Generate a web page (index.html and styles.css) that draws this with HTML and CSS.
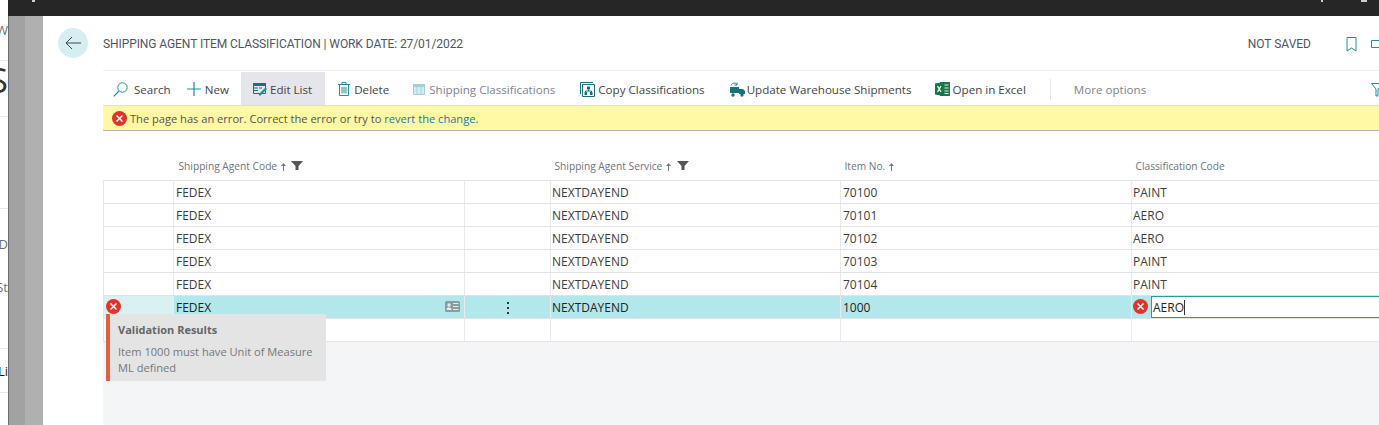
FILE: index.html
```html
<!DOCTYPE html>
<html>
    <head>
        <title>Shipping Agent Item Classification</title>
        <link rel="stylesheet" href="styles.css">
    </head>
    <body>
        <div class="behind">
            <div class="behind-row r1"><span>W</span></div>
            <div class="behind-row r2"><span class="big">S</span></div>
            <div class="behind-row r3"></div>
            <div class="behind-row r4"><span>D</span><span>St</span></div>
            <div class="behind-row r5"><span class="dark">Li</span></div>
            <div class="behind-row r6"></div>
        </div>

        <div class="sheet">
            <div class="topbar">
                <i class="bit bit-a"></i>
                <i class="bit bit-b"></i>
                <i class="bit bit-c"></i>
            </div>

            <div class="sheet-body">
                <div class="shade"></div>

                <div class="main">
                    <header class="title-row">
                        <button class="back">
                            <svg width="16" height="14" viewBox="0 0 16 14"><path d="M7 1 1 7l6 6M1 7h15" fill="none" stroke="#3c4650" stroke-width="1"/></svg>
                        </button>
                        <h1>SHIPPING AGENT ITEM CLASSIFICATION | WORK DATE: 27/01/2022</h1>
                        <span class="saved">NOT SAVED</span>
                        <svg class="bookmark" width="11" height="15" viewBox="0 0 11 15"><path d="M1 .5h9v13.500L5.500 11 1 14z" fill="none" stroke="#1f8f98" stroke-width="1"/></svg>
                        <svg class="expand" width="8" height="8" viewBox="0 0 8 8"><path d="M8 .5H.5v7H8" fill="none" stroke="#1f8f98" stroke-width="1"/></svg>
                    </header>

                    <nav class="toolbar">
                        <a class="tool tool-search">
                            <svg width="15" height="15" viewBox="0 0 15 15"><circle cx="9.500" cy="5.500" r="4.700" fill="none" stroke="#1f8f98"/><path d="M6 9 .8 14.300" stroke="#1f8f98" stroke-width="1.200"/></svg>
                            Search
                        </a>
                        <a class="tool tool-new">
                            <svg width="14" height="14" viewBox="0 0 14 14"><path d="M7 0v14M0 7h14" stroke="#1f8f98" stroke-width="1.200"/></svg>
                            New
                        </a>
                        <a class="tool tool-edit">
                            <svg width="14" height="13" viewBox="0 0 14 13"><path d="M.5.500h12v10H.5z" fill="none" stroke="#16727c"/><path d="M0 0h13v3H0z" fill="#16727c"/><path d="M1 5h4M1 7.500h4M6 5h3" stroke="#16727c"/><path d="m6 11 6.500-6.500 1.500 1.500L7.500 12.500H6z" fill="#1f8f98"/></svg>
                            Edit List
                        </a>
                        <a class="tool tool-delete">
                            <svg width="12" height="14" viewBox="0 0 12 14"><path d="M0 2.500h12M4 2.500V.500h4v2M1.500 2.500v11h9v-11M4 5v6.500M6 5v6.500M8 5v6.500" fill="none" stroke="#1f8f98"/></svg>
                            Delete
                        </a>
                        <a class="tool tool-ship off">
                            <svg width="12" height="11" viewBox="0 0 12 11"><path d="M.5.500h11v10H.5z" fill="#d5edef" stroke="#9fd2d6"/><path d="M0 0h12v2.500H0zM4 2v8M8 2v8" fill="#9fd2d6" stroke="#9fd2d6"/></svg>
                            Shipping Classifications
                        </a>
                        <a class="tool tool-copy">
                            <svg width="15" height="15" viewBox="0 0 15 15"><path d="M.5 12V.500H13" fill="none" stroke="#16727c"/><path d="M2.500 2.500h12v12h-12z" fill="#fff" stroke="#16727c"/><path d="M7 4.500h3v3H7zM4.500 10h2.500v3H4.500zM10 10h2.500v3H10z" fill="#16727c"/><path d="M8.500 7.500V9M5.500 10V9h6v1" fill="none" stroke="#16727c"/></svg>
                            Copy Classifications
                        </a>
                        <a class="tool tool-update">
                            <svg width="16" height="15" viewBox="0 0 16 15"><path d="M1 5h9v6H1z" fill="#16727c"/><path d="M10 7h4l2 2v3h-6z" fill="#16727c"/><circle cx="4" cy="13" r="1.700" fill="#16727c"/><circle cx="13" cy="13" r="1.700" fill="#16727c"/><path d="M2 3.500C3 .5 7 .5 8 2.500M8 .5v2.500H5.500" fill="none" stroke="#1f8f98"/></svg>
                            Update Warehouse Shipments
                        </a>
                        <a class="tool tool-excel">
                            <svg width="15" height="14" viewBox="0 0 15 14"><path d="M5 0h10v14H5z" fill="#21794b"/><path d="M9.500 3h4M9.500 6h4M9.500 9h4M9.500 11.500h4" stroke="#dff0e6"/><path d="M0 1.500 9 0v14L0 12.500z" fill="#107c41"/><path d="m2.500 4 3.500 6M6 4l-3.500 6" stroke="#fff" stroke-width="1.300"/></svg>
                            Open in Excel
                        </a>
                        <span class="divider"></span>
                        <a class="tool tool-more">More options</a>
                        <svg class="filter" width="12" height="14" viewBox="0 0 12 14"><path d="M.5.500h11.500L7 6v7H5V6z" fill="none" stroke="#1f8f98"/></svg>
                    </nav>

                    <div class="banner">
                        <svg class="err" width="15" height="15" viewBox="0 0 15 15"><circle cx="7.500" cy="7.500" r="7.500" fill="#e3322b"/><path d="m4.500 4.500 6 6m0-6-6 6" stroke="#fff" stroke-width="1.500"/></svg>
                        <span>The page has an error. Correct the error or try to <a href="#">revert the change.</a></span>
                    </div>

                    <div class="grid-wrap">
                        <table class="grid">
                            <colgroup>
                                <col class="c-sel"><col class="c-agent"><col class="c-menu"><col class="c-service"><col class="c-item"><col class="c-class">
                            </colgroup>
                            <thead>
                                <tr>
                                    <th></th>
                                    <th>Shipping Agent Code
                                        <svg class="arrow" width="5" height="8" viewBox="0 0 5 8"><path d="M2.500 0 5 3H3v5H2V3H0z" fill="#777"/></svg>
                                        <svg class="funnel" width="12" height="9" viewBox="0 0 12 9"><path d="M0 0h12L7.500 5v4h-3V5z" fill="#555"/></svg>
                                    </th>
                                    <th></th>
                                    <th>Shipping Agent Service
                                        <svg class="arrow" width="5" height="8" viewBox="0 0 5 8"><path d="M2.500 0 5 3H3v5H2V3H0z" fill="#777"/></svg>
                                        <svg class="funnel" width="12" height="9" viewBox="0 0 12 9"><path d="M0 0h12L7.500 5v4h-3V5z" fill="#555"/></svg>
                                    </th>
                                    <th>Item No.
                                        <svg class="arrow" width="5" height="8" viewBox="0 0 5 8"><path d="M2.500 0 5 3H3v5H2V3H0z" fill="#777"/></svg>
                                    </th>
                                    <th>Classification Code</th>
                                </tr>
                            </thead>
                            <tbody>
                                <tr><td></td><td>FEDEX</td><td></td><td>NEXTDAYEND</td><td>70100</td><td>PAINT</td></tr>
                                <tr><td></td><td>FEDEX</td><td></td><td>NEXTDAYEND</td><td>70101</td><td>AERO</td></tr>
                                <tr><td></td><td>FEDEX</td><td></td><td>NEXTDAYEND</td><td>70102</td><td>AERO</td></tr>
                                <tr><td></td><td>FEDEX</td><td></td><td>NEXTDAYEND</td><td>70103</td><td>PAINT</td></tr>
                                <tr><td></td><td>FEDEX</td><td></td><td>NEXTDAYEND</td><td>70104</td><td>PAINT</td></tr>
                                <tr class="active">
                                    <td class="sel-cell">
                                        <svg class="err" width="15" height="15" viewBox="0 0 15 15"><circle cx="7.500" cy="7.500" r="7.500" fill="#e3322b"/><path d="m4.500 4.500 6 6m0-6-6 6" stroke="#fff" stroke-width="1.500"/></svg>
                                    </td>
                                    <td class="agent-cell">
                                        <span>FEDEX</span>
                                        <svg width="15" height="11" viewBox="0 0 15 11"><rect width="15" height="11" rx="1.500" fill="#8f9a9c"/><circle cx="4" cy="4" r="1.700" fill="#d9f1f3"/><path d="M1.500 9c0-2 1-2.500 2.500-2.500S6.500 7 6.500 9z" fill="#d9f1f3"/><path d="M8 2.500h5.500M8 5.500h5.500M8 8.500h5.500" stroke="#d9f1f3"/></svg>
                                    </td>
                                    <td class="menu-cell"><span class="dots"><i></i><i></i><i></i></span></td>
                                    <td>NEXTDAYEND</td>
                                    <td>1000</td>
                                    <td class="class-cell">
                                        <svg class="err" width="15" height="15" viewBox="0 0 15 15"><circle cx="7.500" cy="7.500" r="7.500" fill="#e3322b"/><path d="m4.500 4.500 6 6m0-6-6 6" stroke="#fff" stroke-width="1.500"/></svg>
                                        <span class="field">AERO<i class="caret"></i></span>
                                    </td>
                                </tr>
                                <tr class="blank"><td></td><td></td><td></td><td></td><td></td><td></td></tr>
                            </tbody>
                        </table>

                        <div class="tip">
                            <h3>Validation Results</h3>
                            <p>Item 1000 must have Unit of Measure ML defined</p>
                        </div>
                    </div>
                </div>
            </div>
        </div>
    </body>
</html>
```

FILE: styles.css
```css
html, body {
    margin: 0;
    height: 425px;
    overflow: hidden;
}

body {
    display: flex;
    font-family: "Open Sans", "Noto Sans", sans-serif;
    font-size: 12px;
    color: #333;
    background: #fff;
}

/* the page that is left behind the slide-in sheet */
.behind {
    width: 8px;
    flex: none;
    overflow: hidden;
    color: #66707a;
}

.behind-row {
    display: flex;
    justify-content: flex-end;
    align-items: center;
    box-sizing: border-box;
    border-bottom: 1px solid #e8e8e8;
    white-space: nowrap;
    font-size: 13px;
}

.behind-row.r1 { height: 61px; }
.behind-row.r2 { height: 56px; align-items: flex-start; padding-top: 2px; }
.behind-row.r3 { height: 92px; }
.behind-row.r4 {
    height: 140px;
    flex-direction: column;
    align-items: flex-end;
    justify-content: flex-start;
    gap: 25px;
    padding-top: 26px;
}
.behind-row.r5 { height: 44px; }
.behind-row.r6 { border: 0; height: 32px; }

.behind .big {
    font-size: 34px;
    color: #333;
    line-height: 1;
}

.behind .dark {
    color: #222;
}

.sheet {
    flex: 1;
    display: flex;
    flex-direction: column;
    min-width: 0;
}

.topbar {
    height: 16px;
    flex: none;
    background: #262626;
    display: flex;
}

.bit {
    display: block;
    width: 3px;
    height: 2px;
    background: #cfcfcf;
}

.bit-a { margin-left: 24px; }
.bit-b { margin-left: 1286px; width: 2px; }
.bit-c { margin-left: 38px; width: 6px; }

.sheet-body {
    flex: 1;
    display: flex;
    min-height: 0;
}

.shade {
    width: 35px;
    flex: none;
    background: linear-gradient(to right, #6d6d6d 0, #6d6d6d 1px, #a2a2a2 1px, #a2a2a2 17px, #b0b0b0 17px);
}

.main {
    flex: 1;
    min-width: 0;
    padding-left: 60px;
    display: flex;
    flex-direction: column;
}

.title-row {
    height: 55px;
    flex: none;
    box-sizing: border-box;
    display: flex;
    align-items: center;
    padding-top: 2px;
    border-bottom: 1px solid #eeeeee;
    position: relative;
}

.back {
    position: absolute;
    left: -45px;
    top: 12px;
    width: 30px;
    height: 30px;
    padding: 0;
    border: 0;
    border-radius: 50%;
    background: #d5eef0;
    display: flex;
    align-items: center;
    justify-content: center;
}

h1 {
    margin: 0;
    font-family: Roboto, "Open Sans", sans-serif;
    font-size: 12px;
    font-weight: 400;
    letter-spacing: -0.08px;
    color: #4c5664;
}

.saved {
    margin-left: auto;
    font-family: Roboto, "Open Sans", sans-serif;
    font-size: 12px;
    color: #4c5664;
}

.bookmark {
    margin-left: 35px;
}

.expand {
    margin-left: 14px;
}

.toolbar {
    height: 34px;
    flex: none;
    box-sizing: border-box;
    display: flex;
    align-items: stretch;
    padding-top: 1px;
    font-size: 11.600px;
}

.tool {
    display: flex;
    align-items: center;
    white-space: nowrap;
    color: #444;
    gap: 4px;
    padding-top: 1px;
}

.tool svg {
    flex: none;
}

.tool.off, .tool-more {
    color: #7d8590;
}

.tool-search { margin-left: 10px; gap: 6px; }
.tool-new { margin-left: 16px; }
.tool-edit {
    margin-left: 12px;
    padding: 1px 13px 0 12px;
    gap: 3px;
    background: #e4e6e9;
}
.tool-delete { margin-left: 13px; }
.tool-ship { margin-left: 24px; }
.tool-copy { margin-left: 25px; gap: 3px; }
.tool-update { margin-left: 24px; gap: 2px; }
.tool-excel { margin-left: 23px; gap: 3px; }

.divider {
    width: 1px;
    margin: 7px 0 5px 24px;
    background: #e6e6e6;
}

.tool-more { margin-left: 23px; }

.filter {
    margin-left: auto;
    margin-top: 11px;
    margin-right: -4px;
}

.banner {
    height: 26px;
    flex: none;
    box-sizing: border-box;
    display: flex;
    align-items: center;
    gap: 3px;
    padding-left: 9px;
    background: #fff8a5;
    border-top: 1px solid #dcdcdc;
    border-bottom: 1px solid #b4b4b4;
    font-size: 11.100px;
    color: #555;
}

.banner span {
    padding-top: 1px;
}

.banner a {
    color: #0f7ab8;
    text-decoration: none;
}

.grid-wrap {
    flex: 1;
    background: #f4f5f7;
    position: relative;
}

.grid {
    width: 100%;
    table-layout: fixed;
    border-collapse: collapse;
    background: #fff;
}

.c-sel { width: 70px; }
.c-agent { width: 291px; }
.c-menu { width: 86px; }
.c-service { width: 290px; }
.c-item { width: 291px; }

thead tr {
    height: 49px;
}

th {
    padding: 22px 0 0 5px;
    text-align: left;
    font-weight: 400;
    font-size: 10.200px;
    color: #6b7480;
    white-space: nowrap;
}

th:nth-child(n+4) {
    padding-left: 4px;
}

.arrow {
    margin-left: 1px;
    vertical-align: -0.500px;
}

.funnel {
    margin-left: 3px;
    vertical-align: 0;
}

tbody tr {
    height: 23px;
}

td {
    box-sizing: border-box;
    height: 23px;
    padding: 1px 0 0 2px;
    border: 1px solid #e3e4e7;
    border-right-color: #eaeaec;
    color: #3d3d3d;
    white-space: nowrap;
}

td:first-child {
    border-left: 1px solid #e6e7ea;
}

td:nth-child(4), td:last-child {
    padding-left: 1px;
}

td:last-child {
    border-right: 0;
}

tr.active td {
    background: #b2e8ec;
    color: #222;
}

tr.active .sel-cell {
    background: #d9f1f3;
    padding: 0 0 0 2px;
    line-height: 0;
}

.agent-cell span {
    float: left;
}

.agent-cell svg {
    float: right;
    margin: 2px 4px 0 0;
}

tr.active .menu-cell {
    text-align: center;
    padding: 0;
}

.dots {
    display: inline-flex;
    flex-direction: column;
    gap: 3px;
    vertical-align: middle;
}

.dots i {
    width: 2px;
    height: 2px;
    background: #333;
}

tr.active .class-cell {
    padding: 0 0 0 1px;
    line-height: 0;
    font-size: 0;
    border-top-color: #2b9aa0;
}

.class-cell .err {
    vertical-align: middle;
}

.field {
    display: inline-block;
    box-sizing: border-box;
    margin-left: 3px;
    width: 230px;
    height: 22px;
    line-height: 21px;
    padding-left: 1px;
    vertical-align: middle;
    background: #fff;
    border: 1px solid #2b9aa0;
    border-right: 0;
    font-size: 12px;
}

.caret {
    display: inline-block;
    width: 1px;
    height: 15px;
    background: #333;
    vertical-align: -3px;
}

.tip {
    position: absolute;
    left: 3px;
    top: 183px;
    box-sizing: border-box;
    width: 220px;
    height: 67px;
    padding: 8px 4px 0 8px;
    background: #e4e4e4;
    border-left: 4px solid #e2603f;
    color: #777;
    font-size: 11.100px;
}

.tip h3 {
    margin: 0;
    font-size: 11px;
    font-weight: 700;
    color: #666;
    line-height: 16px;
}

.tip p {
    margin: 6px 0 0;
    line-height: 16px;
}
```
